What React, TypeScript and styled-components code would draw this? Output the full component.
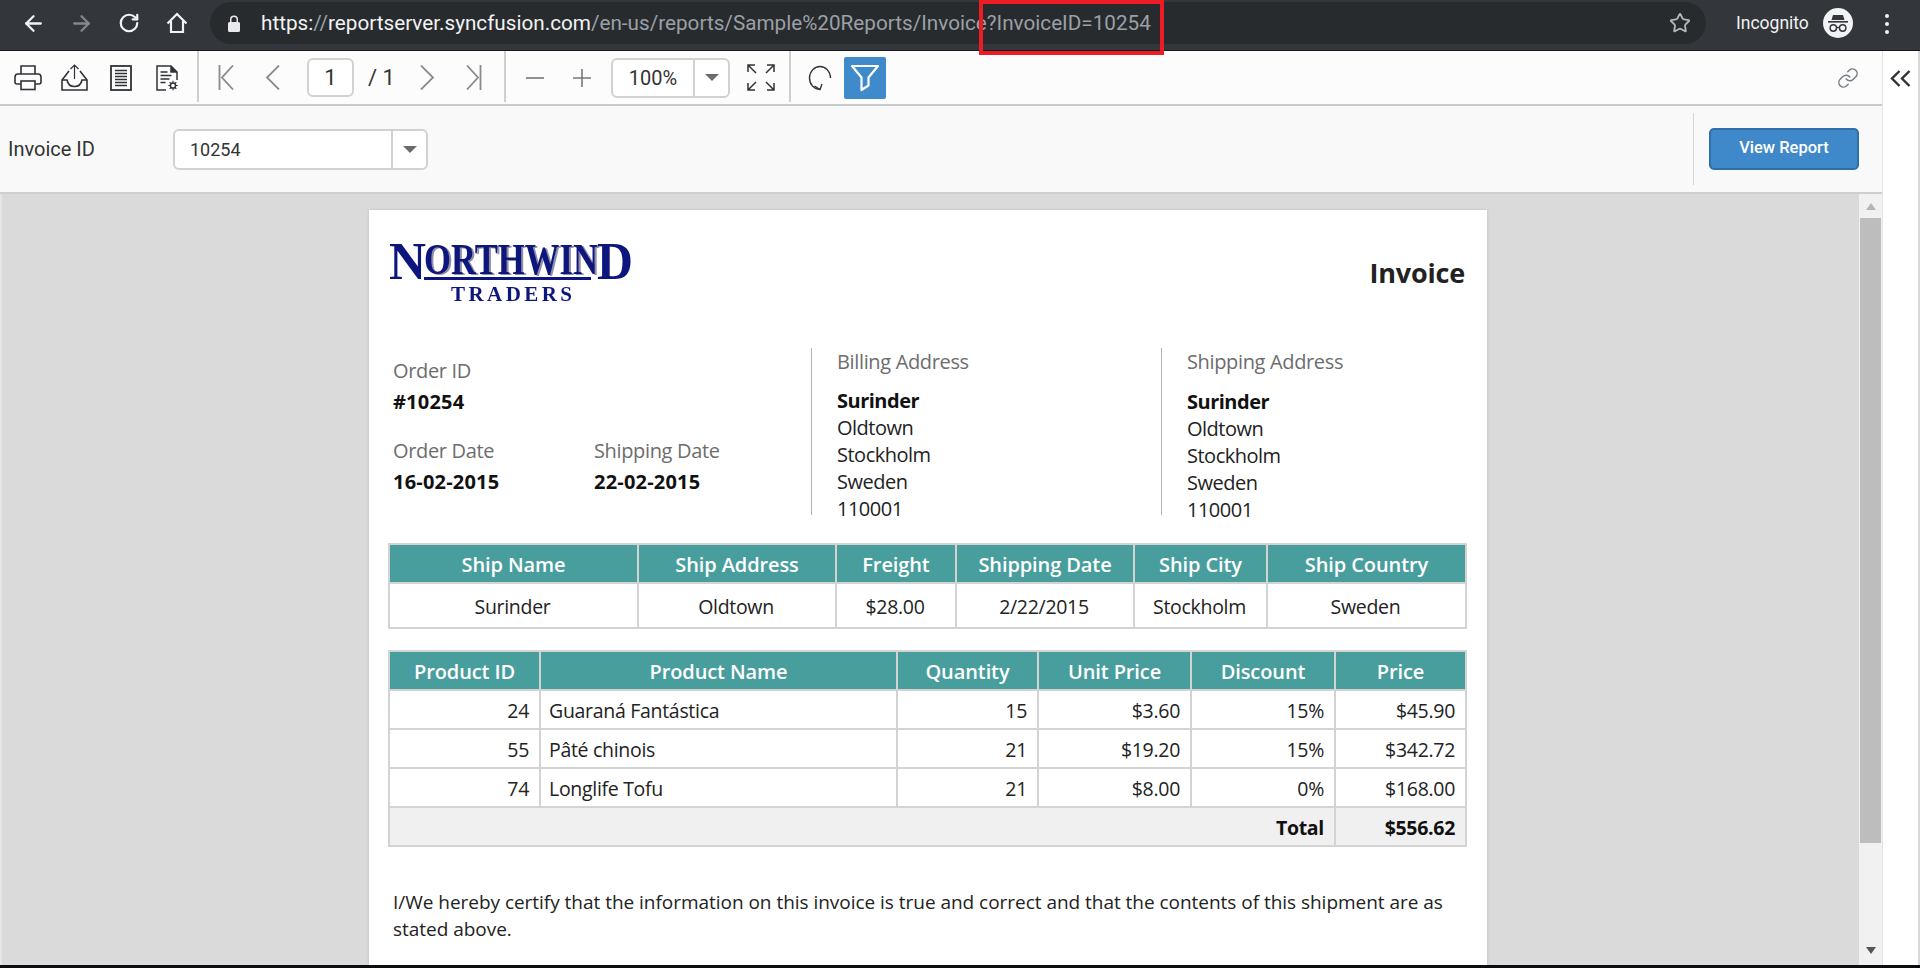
import React, { FC } from 'react'
import styled, { createGlobalStyle } from 'styled-components'
import { ArrowLeft, ArrowRight, RotateCw, Star, Link as LinkIcon } from 'lucide-react'

const GlobalStyle = createGlobalStyle`
  html, body { margin: 0; padding: 0; background: #fff; overflow: hidden; }
  * { box-sizing: border-box; }
`

const Root = styled.div`
  position: relative;
  width: 1920px;
  height: 968px;
  display: flex;
  flex-direction: column;
  overflow: hidden;
  font-family: Roboto, "Liberation Sans", sans-serif;
`

const ChromeBar = styled.div`
  height: 51px;
  flex: none;
  display: flex;
  align-items: flex-start;
  padding: 2px 0 0 9px;
  background: #33363a;
  border-bottom: 1px solid #17191b;
`

const NavButton = styled.div<{ $muted?: boolean }>`
  width: 48px;
  height: 42px;
  display: flex;
  align-items: center;
  justify-content: center;
  color: ${(p) => (p.$muted ? '#85888b' : '#f1f3f4')};
`

const AddressBar = styled.div`
  width: 1496px;
  height: 42px;
  margin-left: 9px;
  padding: 0 15px 0 18px;
  display: flex;
  align-items: center;
  background: #282b2e;
  border-radius: 21px;
`

const Url = styled.div`
  flex: 1;
  margin-left: 21px;
  font-size: 20.7px;
  color: #9aa0a6;
  white-space: nowrap;
`

const Host = styled.span`
  color: #f1f3f4;
`

const IncognitoLabel = styled.div`
  margin: 9px 0 0 30px;
  width: 87px;
  font-size: 17.5px;
  line-height: 24px;
  color: #f1f3f4;
`

const AvatarSlot = styled.div`
  width: 30px;
  height: 30px;
  margin-top: 6px;
`

const MenuDots = styled.div`
  margin: 12px 0 0 32px;
  display: flex;
  flex-direction: column;
  gap: 4px;
`

const Dot = styled.span`
  width: 4px;
  height: 4px;
  border-radius: 50%;
  background: #f1f3f4;
`

const RedMark = styled.div`
  position: absolute;
  left: 979px;
  top: 0;
  width: 185px;
  height: 55px;
  border: 4px solid #ed1c24;
`

const Workspace = styled.div`
  flex: 1;
  min-height: 0;
  display: flex;
`

const ViewerColumn = styled.div`
  width: 1882px;
  display: flex;
  flex-direction: column;
`

const SidePane = styled.div`
  flex: 1;
  padding-top: 19px;
  display: flex;
  justify-content: center;
  align-items: flex-start;
  background: #fff;
  border-left: 1px solid #e4e4e4;
  border-right: 2px solid #d8d8d8;
`

const Toolbar = styled.div`
  height: 55px;
  flex: none;
  display: flex;
  background: #fcfcfc;
  border-bottom: 2px solid #cbcbcb;
`

const ToolGroup = styled.div<{ $w: number; $pad: number }>`
  width: ${(p) => p.$w}px;
  height: 51px;
  padding: 2px 0 0 ${(p) => p.$pad}px;
  display: flex;
  align-items: center;
  border-right: 2px solid #cfcfcf;
`

const ToolEnd = styled.div`
  flex: 1;
  display: flex;
  align-items: center;
  padding-left: 6px;
`

const ToolButton = styled.div`
  width: 46.5px;
  height: 42px;
  flex: none;
  display: flex;
  align-items: center;
  justify-content: center;
`

const LinkSlot = styled.div`
  margin-left: auto;
  margin-right: 23px;
  color: #6f7f8a;
  display: flex;
`

const ActiveFilter = styled.div`
  width: 42px;
  height: 42px;
  display: flex;
  align-items: center;
  justify-content: center;
  background: #3f8acb;
  border-radius: 2px;
`

const PageInput = styled.div`
  width: 47px;
  height: 39px;
  margin: 0 9px 0 11px;
  display: flex;
  align-items: center;
  justify-content: center;
  background: #fff;
  border: 2px solid #d2d2d2;
  border-radius: 6px;
  font-size: 22px;
  color: #333;
`

const PageCount = styled.div`
  width: 41px;
  padding-left: 5px;
  font-size: 22px;
  color: #333;
  white-space: nowrap;
`

const Combo = styled.div<{ $w: number; $h: number; $text: number }>`
  width: ${(p) => p.$w}px;
  height: ${(p) => p.$h}px;
  flex: none;
  display: flex;
  background: #fff;
  border: 2px solid #d2d2d2;
  border-radius: 6px;
  font-size: ${(p) => p.$text}px;
  color: #333;
`

const ZoomCombo = styled(Combo)`
  margin: 0 8px 0 6px;
`

const ComboValue = styled.div<{ $center?: boolean }>`
  flex: 1;
  display: flex;
  align-items: center;
  justify-content: ${(p) => (p.$center ? 'center' : 'flex-start')};
  padding-left: ${(p) => (p.$center ? 0 : 15)}px;
`

const ComboCaret = styled.div`
  width: 35px;
  display: flex;
  align-items: center;
  justify-content: center;
  border-left: 2px solid #d2d2d2;
  &::after {
    content: '';
    border-left: 7px solid transparent;
    border-right: 7px solid transparent;
    border-top: 7px solid #6b6b6b;
  }
`

const FilterPanel = styled.div`
  height: 88px;
  flex: none;
  display: flex;
  align-items: center;
  padding-left: 8px;
  background: #f9f9f9;
  border-bottom: 2px solid #cfcfcf;
`

const FilterLabel = styled.div`
  width: 165px;
  font-size: 20px;
  color: #333;
`

const SubmitArea = styled.div`
  margin-left: auto;
  height: 72px;
  padding: 15px 23px 0 15px;
  border-left: 1px solid #d4d4d4;
`

const ViewButton = styled.div`
  width: 150px;
  height: 42px;
  display: flex;
  align-items: center;
  justify-content: center;
  padding-bottom: 4px;
  background: #3f88c9;
  border: 2px solid #2f6fa8;
  border-radius: 5px;
  color: #fff;
  font-size: 16.5px;
  font-weight: 500;
`

const Viewer = styled.div`
  flex: 1;
  min-height: 0;
  display: flex;
  background: #dadada;
  border-left: 2px solid #e6e6e6;
  overflow: hidden;
`

const PageArea = styled.div`
  flex: 1;
  padding: 16px 0 0 367px;
  overflow: hidden;
`

const ReportPage = styled.div`
  width: 1118px;
  height: 900px;
  padding: 33px 20px 0;
  background: #fff;
  box-shadow: 0 0 3px #bdbdbd;
  font-family: "Open Sans", "Noto Sans", sans-serif;
  font-size: 20px;
  line-height: 27px;
  color: #222;
`

const ReportHeader = styled.div`
  display: flex;
  align-items: center;
  justify-content: space-between;
  height: 59px;
`

const ReportTitle = styled.h1`
  margin: 0 2px 0 0;
  font-size: 27px;
  font-weight: 700;
  letter-spacing: -0.2px;
  line-height: 34px;
  color: #222;
`

const InfoRow = styled.div`
  margin-top: 46px;
  height: 167px;
  display: flex;
`

const OrderBlock = styled.div`
  width: 422px;
  padding: 9px 0 0 4px;
  display: grid;
  grid-template-columns: 201px 1fr;
  grid-template-rows: auto auto;
  align-content: start;
  row-gap: 22px;
`

const Field = styled.div<{ $wide?: boolean }>`
  grid-column: ${(p) => (p.$wide ? '1 / span 2' : 'auto')};
`

const Label = styled.div`
  color: #6d6d6d;
  letter-spacing: -0.35px;
`

const Value = styled.div`
  margin-top: 4px;
  font-weight: 700;
  color: #111;
  letter-spacing: 0.2px;
`

const AddressBlock = styled.div<{ $w: number; $gap: number }>`
  width: ${(p) => p.$w}px;
  padding-left: 25px;
  border-left: 1px solid #b5b5b5;
  letter-spacing: -0.5px;
  & > strong {
    display: block;
    margin-top: ${(p) => p.$gap}px;
    font-weight: 700;
    color: #111;
  }
`

const AddressLine = styled.div``

const Grid = styled.table<{ $top: number }>`
  width: 1077px;
  margin: ${(p) => p.$top}px 0 0 -1px;
  table-layout: fixed;
  border-collapse: collapse;
`

const HeadCell = styled.th`
  height: 39px;
  padding: 1px 0 0;
  background: #489e9d;
  border: 2px solid #d3d3d3;
  color: #fff;
  font-weight: 600;
  letter-spacing: -0.1px;
  text-align: center;
`

const Cell = styled.td<{ $align?: string; $h?: number }>`
  height: ${(p) => p.$h || 39}px;
  padding: 2px 10px 0 8px;
  border: 2px solid #d3d3d3;
  font-size: 19.5px;
  letter-spacing: -0.3px;
  text-align: ${(p) => p.$align || 'left'};
`

const TotalCell = styled(Cell)`
  background: #f1f0f1;
  font-weight: 700;
  color: #111;
`

const Statement = styled.p`
  margin: 42px 20px 0 4px;
  font-size: 19px;
  letter-spacing: -0.03px;
`

const ScrollTrack = styled.div`
  width: 23px;
  flex: none;
  display: flex;
  flex-direction: column;
  align-items: center;
  background: #f1f1f1;
`

const ScrollArrow = styled.div<{ $down?: boolean }>`
  height: 24px;
  flex: none;
  display: flex;
  align-items: center;
  justify-content: center;
  margin-top: ${(p) => (p.$down ? 'auto' : '0')};
  padding-bottom: ${(p) => (p.$down ? '6px' : '0')};
  &::after {
    content: '';
    border-left: 5px solid transparent;
    border-right: 5px solid transparent;
    ${(p) => (p.$down ? 'border-top: 7px solid #555;' : 'border-bottom: 7px solid #b5b5b5;')}
  }
`

const ScrollThumb = styled.div`
  width: 21px;
  height: 625px;
  flex: none;
  background: #bdbdbd;
`

const BottomStrip = styled.div`
  height: 3px;
  flex: none;
  background: #0c0d0e;
`

const ink = '#2f3237'
const nav = '#8b8b8b'

const PrintGlyph = () => (
  <svg width="28" height="26" viewBox="0 0 28 26" fill="none" stroke={ink} strokeWidth="1.6">
    <path d="M7 9V1h14v8" />
    <path d="M7 19H3a2 2 0 0 1-2-2v-5a3 3 0 0 1 3-3h20a3 3 0 0 1 3 3v5a2 2 0 0 1-2 2h-4" />
    <rect x="7" y="16" width="14" height="8.5" />
  </svg>
)

const ExportGlyph = () => (
  <svg width="27" height="27" viewBox="0 0 27 27" fill="none" stroke={ink} strokeWidth="1.6">
    <path d="M13.5 15V1M9.5 5l4-4 4 4" strokeWidth="1.2" />
    <path d="M8 7L1 16v10h25V16l-7-9" />
    <path d="M1 16h5c1 5 3.5 6.5 7.500 6.500S20 21 21 16h5" />
  </svg>
)

const PageGlyph = () => (
  <svg width="22" height="26" viewBox="0 0 22 26" fill="none" stroke={ink}>
    <rect x="1" y="1" width="20" height="24" strokeWidth="1.8" />
    <path d="M5 5.500h12M5 8.500h12M5 11.500h12M5 14.500h12M5 17.500h12M5 20.500h12" strokeWidth="1.6" />
  </svg>
)

const ReportSetupGlyph = () => (
  <svg width="23" height="26" viewBox="0 0 23 26" fill="none" stroke={ink} strokeWidth="1.5">
    <path d="M10 25H1V1h14l6 6v8" />
    <path d="M15 1v6h6" fill={ink} />
    <path d="M4.500 7h7M4.500 10.500h11M4.500 14h9M4.500 17.500h5" strokeWidth="1.300" />
    <circle cx="17" cy="20.500" r="2.600" />
    <path d="M17 15.800v2M17 23.200v2M12.300 20.500h2M19.700 20.500h2M13.700 17.200l1.400 1.400M18.900 22.400l1.400 1.400M13.700 23.800l1.400-1.400M18.900 18.600l1.400-1.400" strokeWidth="1.200" />
  </svg>
)

const Chevron: FC<{ dir: 'first' | 'prev' | 'next' | 'last' }> = ({ dir }) => {
  const paths = {
    first: 'M1.500 0v25M15 0.500L4 12.500l11 12',
    prev: 'M14 0.500L2 12.500l12 12',
    next: 'M2 0.500l12 12-12 12',
    last: 'M14.500 0v25M1 0.500l11 12-11 12',
  }
  return (
    <svg width="16" height="25" viewBox="0 0 16 25" fill="none" stroke={nav} strokeWidth="1.800">
      <path d={paths[dir]} />
    </svg>
  )
}

const MinusGlyph = () => (
  <svg width="18" height="18" viewBox="0 0 18 18" stroke="#777" strokeWidth="1.600"><path d="M0 9h18" /></svg>
)

const PlusGlyph = () => (
  <svg width="18" height="18" viewBox="0 0 18 18" stroke="#777" strokeWidth="1.600"><path d="M0 9h18M9 0v18" /></svg>
)

const FitGlyph = () => (
  <svg width="28" height="27" viewBox="0 0 28 27" fill="none" stroke={ink} strokeWidth="1.500">
    <path d="M1 8V1h7M1 1l8 8M20 1h7v7M27 1l-8 8M1 19v7h7M1 26l8-8M27 19v7h-7M27 26l-8-8" />
  </svg>
)

const RefreshGlyph = () => (
  <svg width="24" height="26" viewBox="0 0 24 26" fill="none" stroke={ink} strokeWidth="1.400">
    <path d="M22.500 13A10.500 11.500 0 1 0 12 24.500" />
    <path d="M6.500 21l5.500 3.500 2-5.500" />
  </svg>
)

const FunnelGlyph = () => (
  <svg width="30" height="28" viewBox="0 0 30 28" fill="none" stroke="#fff" strokeWidth="2.200" strokeLinejoin="round">
    <path d="M2 2h26L18.500 13.500v8l-7 4.500V13.500z" />
  </svg>
)

const DoubleChevron = () => (
  <svg width="21" height="17" viewBox="0 0 21 17" fill="none" stroke="#333" strokeWidth="2.400">
    <path d="M9.500 1L2 8.500 9.500 16M19.500 1L12 8.500l7.500 7.500" />
  </svg>
)

const HomeGlyph = () => (
  <svg width="22" height="22" viewBox="0 0 22 22" fill="none" stroke="#f1f3f4" strokeWidth="2.200">
    <path d="M1.500 11.500L11 2l9.500 9.500M5 9v11h12V9" />
  </svg>
)

const LockGlyph = () => (
  <svg width="12" height="17" viewBox="0 0 12 17" fill="#e8eaed">
    <path d="M2 7V4.500a4 4 0 0 1 8 0V7h.500A1.500 1.500 0 0 1 12 8.500v7a1.500 1.500 0 0 1-1.500 1.500h-9A1.500 1.500 0 0 1 0 15.500v-7A1.500 1.500 0 0 1 1.500 7zm1.500 0h5V4.500a2.500 2.500 0 0 0-5 0z" />
  </svg>
)

const IncognitoGlyph = () => (
  <svg width="30" height="30" viewBox="0 0 30 30">
    <circle cx="15" cy="15" r="15" fill="#f1f3f4" />
    <path d="M10 7h10l1.500 5h-13z" fill="#33363a" />
    <path d="M5 13h20v1.600H5z" fill="#33363a" />
    <g fill="none" stroke="#33363a" strokeWidth="1.400">
      <circle cx="10.300" cy="20" r="3.200" />
      <circle cx="19.700" cy="20" r="3.200" />
      <path d="M13.500 19.500h3" />
    </g>
  </svg>
)

const Logo = () => (
  <svg width="246" height="60" viewBox="0 0 246 60" overflow="visible">
    <defs>
      <filter id="soft"><feGaussianBlur stdDeviation="0.5" /></filter>
    </defs>
    <g fontFamily='"Liberation Serif", serif' fontWeight="700" filter="url(#soft)">
      <g fill="#8f8fa8" transform="translate(2 1.200)">
        <text x="35" y="31" fontSize="44" textLength="174" lengthAdjust="spacingAndGlyphs">ORTHWIN</text>
      </g>
      <g fill="#11157c">
        <text x="0" y="36" fontSize="53" textLength="37" lengthAdjust="spacingAndGlyphs">N</text>
        <text x="35" y="31" fontSize="44" textLength="174" lengthAdjust="spacingAndGlyphs">ORTHWIN</text>
        <text x="208" y="36" fontSize="53" textLength="36" lengthAdjust="spacingAndGlyphs">D</text>
        <rect x="35" y="34" width="167" height="3" />
        <text x="62" y="58" fontSize="21" textLength="121">TRADERS</text>
      </g>
    </g>
  </svg>
)

const shipColumns = [249, 198, 120, 178, 133, 199]
const shipHeads = ['Ship Name', 'Ship Address', 'Freight', 'Shipping Date', 'Ship City', 'Ship Country']
const shipValues = ['Surinder', 'Oldtown', '$28.00', '2/22/2015', 'Stockholm', 'Sweden']

const productColumns = [151, 357, 141, 153, 144, 131]
const productHeads = ['Product ID', 'Product Name', 'Quantity', 'Unit Price', 'Discount', 'Price']
const products = [
  ['24', 'Guaraná Fantástica', '15', '$3.60', '15%', '$45.90'],
  ['55', 'Pâté chinois', '21', '$19.20', '15%', '$342.72'],
  ['74', 'Longlife Tofu', '21', '$8.00', '0%', '$168.00'],
]

const addressLines = ['Oldtown', 'Stockholm', 'Sweden', '110001']

export default function App() {
  return (
    <Root>
      <GlobalStyle />
      <ChromeBar>
        <NavButton><ArrowLeft size={25} strokeWidth={2.2} /></NavButton>
        <NavButton $muted><ArrowRight size={25} strokeWidth={2.2} /></NavButton>
        <NavButton><RotateCw size={22} strokeWidth={2.4} /></NavButton>
        <NavButton><HomeGlyph /></NavButton>
        <AddressBar>
          <LockGlyph />
          <Url>
            <Host>https:</Host>//<Host>reportserver.syncfusion.com</Host>/en-us/reports/Sample%20Reports/Invoice?InvoiceID=10254
          </Url>
          <Star size={22} color="#b5b8bb" strokeWidth={2} />
        </AddressBar>
        <IncognitoLabel>Incognito</IncognitoLabel>
        <AvatarSlot><IncognitoGlyph /></AvatarSlot>
        <MenuDots><Dot /><Dot /><Dot /></MenuDots>
      </ChromeBar>

      <Workspace>
        <ViewerColumn>
          <Toolbar>
            <ToolGroup $w={199} $pad={5}>
              <ToolButton><PrintGlyph /></ToolButton>
              <ToolButton><ExportGlyph /></ToolButton>
              <ToolButton><PageGlyph /></ToolButton>
              <ToolButton><ReportSetupGlyph /></ToolButton>
            </ToolGroup>
            <ToolGroup $w={307} $pad={4}>
              <ToolButton><Chevron dir="first" /></ToolButton>
              <ToolButton><Chevron dir="prev" /></ToolButton>
              <PageInput>1</PageInput>
              <PageCount>/ 1</PageCount>
              <ToolButton><Chevron dir="next" /></ToolButton>
              <ToolButton><Chevron dir="last" /></ToolButton>
            </ToolGroup>
            <ToolGroup $w={285} $pad={6}>
              <ToolButton><MinusGlyph /></ToolButton>
              <ToolButton><PlusGlyph /></ToolButton>
              <ZoomCombo $w={119} $h={40} $text={20}>
                <ComboValue $center>100%</ComboValue>
                <ComboCaret />
              </ZoomCombo>
              <ToolButton><FitGlyph /></ToolButton>
            </ToolGroup>
            <ToolEnd>
              <ToolButton><RefreshGlyph /></ToolButton>
              <ActiveFilter><FunnelGlyph /></ActiveFilter>
              <LinkSlot><LinkIcon size={22} strokeWidth={1.6} /></LinkSlot>
            </ToolEnd>
          </Toolbar>

          <FilterPanel>
            <FilterLabel>Invoice ID</FilterLabel>
            <Combo $w={255} $h={41} $text={18}>
              <ComboValue>10254</ComboValue>
              <ComboCaret />
            </Combo>
            <SubmitArea>
              <ViewButton>View Report</ViewButton>
            </SubmitArea>
          </FilterPanel>

          <Viewer>
            <PageArea>
              <ReportPage>
                <ReportHeader>
                  <Logo />
                  <ReportTitle>Invoice</ReportTitle>
                </ReportHeader>

                <InfoRow>
                  <OrderBlock>
                    <Field $wide>
                      <Label>Order ID</Label>
                      <Value>#10254</Value>
                    </Field>
                    <Field>
                      <Label>Order Date</Label>
                      <Value>16-02-2015</Value>
                    </Field>
                    <Field>
                      <Label>Shipping Date</Label>
                      <Value>22-02-2015</Value>
                    </Field>
                  </OrderBlock>
                  <AddressBlock $w={350} $gap={12}>
                    <Label>Billing Address</Label>
                    <strong>Surinder</strong>
                    {addressLines.map((line) => <AddressLine key={line}>{line}</AddressLine>)}
                  </AddressBlock>
                  <AddressBlock $w={300} $gap={13}>
                    <Label>Shipping Address</Label>
                    <strong>Surinder</strong>
                    {addressLines.map((line) => <AddressLine key={line}>{line}</AddressLine>)}
                  </AddressBlock>
                </InfoRow>

                <Grid $top={28}>
                  <colgroup>
                    {shipColumns.map((w, i) => <col key={i} width={w} />)}
                  </colgroup>
                  <thead>
                    <tr>{shipHeads.map((h) => <HeadCell key={h}>{h}</HeadCell>)}</tr>
                  </thead>
                  <tbody>
                    <tr>
                      {shipValues.map((v) => <Cell key={v} $align="center" $h={45}>{v}</Cell>)}
                    </tr>
                  </tbody>
                </Grid>

                <Grid $top={21}>
                  <colgroup>
                    {productColumns.map((w, i) => <col key={i} width={w} />)}
                  </colgroup>
                  <thead>
                    <tr>{productHeads.map((h) => <HeadCell key={h}>{h}</HeadCell>)}</tr>
                  </thead>
                  <tbody>
                    {products.map((row) => (
                      <tr key={row[0]}>
                        {row.map((v, i) => <Cell key={i} $align={i === 1 ? 'left' : 'right'}>{v}</Cell>)}
                      </tr>
                    ))}
                    <tr>
                      <TotalCell colSpan={5} $align="right">Total</TotalCell>
                      <TotalCell $align="right">$556.62</TotalCell>
                    </tr>
                  </tbody>
                </Grid>

                <Statement>
                  I/We hereby certify that the information on this invoice is true and correct and that the contents of this shipment are as stated above.
                </Statement>
              </ReportPage>
            </PageArea>
            <ScrollTrack>
              <ScrollArrow />
              <ScrollThumb />
              <ScrollArrow $down />
            </ScrollTrack>
          </Viewer>
        </ViewerColumn>
        <SidePane><DoubleChevron /></SidePane>
      </Workspace>
      <BottomStrip />
      <RedMark />
    </Root>
  )
}
